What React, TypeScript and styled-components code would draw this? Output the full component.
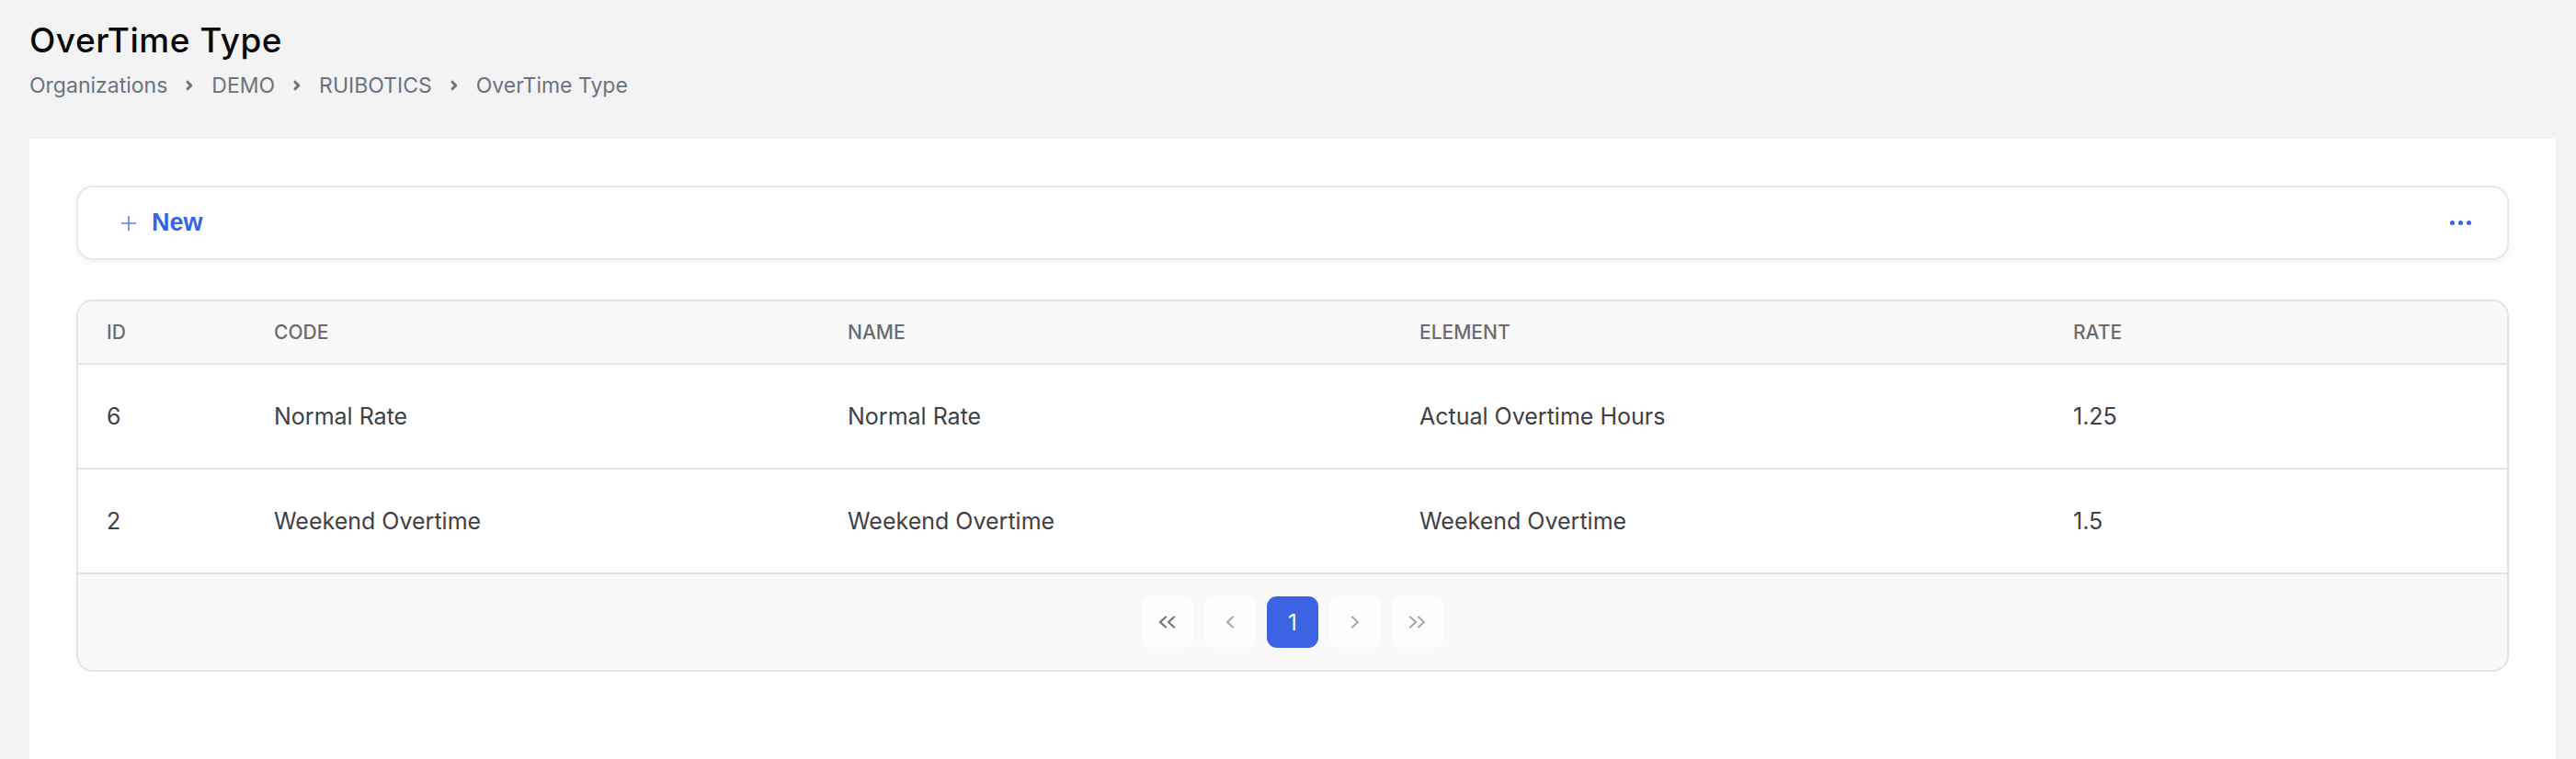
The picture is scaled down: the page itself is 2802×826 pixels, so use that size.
import React from 'react';
import styled, { createGlobalStyle } from 'styled-components';

type OvertimeType = {
    id: number;
    code: string;
    name: string;
    element: string;
    rate: string;
}

const rows: Array<OvertimeType> = [
    { id: 6, code: 'Normal Rate', name: 'Normal Rate', element: 'Actual Overtime Hours', rate: '1.25' },
    { id: 2, code: 'Weekend Overtime', name: 'Weekend Overtime', element: 'Weekend Overtime', rate: '1.5' },
];

const columns = ['ID', 'CODE', 'NAME', 'ELEMENT', 'RATE'];

const crumbs = ['Organizations', 'DEMO', 'RUIBOTICS', 'OverTime Type'];

const GlobalStyle = createGlobalStyle`
    html, body {
        margin: 0;
        background: #f3f3f3;
        font-family: Inter, "Noto Sans", sans-serif;
    }
`

const Crumb = () => (
    <svg width="10" height="12" viewBox="0 0 10 12">
        <path d="M3 2.2l3.8 3.8L3 9.8" fill="none" stroke="#6b7280" strokeWidth="3" strokeLinecap="round" strokeLinejoin="round" />
    </svg>
);

// single or double chevron used by the pager buttons
const Chevron: React.FC<{ dir: 'left' | 'right'; double?: boolean }> = ({ dir, double }) => {
    const one = dir === 'left' ? 'M8 1.5L2 7l6 5.5' : 'M2 1.5L8 7l-6 5.5';
    const stroke = { fill: 'none', stroke: 'currentColor', strokeWidth: 2.2, strokeLinecap: 'round' as const, strokeLinejoin: 'round' as const };
    return <svg width={double ? 20 : 10} height="14" viewBox={double ? '0 0 20 14' : '0 0 10 14'}>
        <path d={one} {...stroke} transform={double ? 'translate(0 0)' : 'translate(0 0)'} />
        {double && <path d={one} {...stroke} transform="translate(9 0)" />}
    </svg>
};

export default function App() {
    return <Page>
        <GlobalStyle />
        <Header>
            <Title>OverTime Type</Title>
            <Breadcrumbs>
                {crumbs.map((c, i) => <React.Fragment key={c}>
                    {i > 0 && <Crumb />}
                    <span>{c}</span>
                </React.Fragment>)}
            </Breadcrumbs>
        </Header>
        <Card>
            <Toolbar>
                <NewButton>
                    <svg width="18" height="18" viewBox="0 0 18 18">
                        <path d="M9 1v16M1 9h16" stroke="#5b7ff0" strokeWidth="1.6" />
                    </svg>
                    New
                </NewButton>
                <MoreButton>
                    <Dot /><Dot /><Dot />
                </MoreButton>
            </Toolbar>
            <Table>
                <HeadRow>
                    {columns.map(c => <HeadCell key={c}>{c}</HeadCell>)}
                </HeadRow>
                {rows.map(r => <Row key={r.id}>
                    <Cell>{r.id}</Cell>
                    <Cell>{r.code}</Cell>
                    <Cell>{r.name}</Cell>
                    <Cell>{r.element}</Cell>
                    <Cell>{r.rate}</Cell>
                </Row>)}
                <Footer>
                    <PageButton tone="dark"><Chevron dir="left" double /></PageButton>
                    <PageButton><Chevron dir="left" /></PageButton>
                    <PageButton active>1</PageButton>
                    <PageButton><Chevron dir="right" /></PageButton>
                    <PageButton><Chevron dir="right" double /></PageButton>
                </Footer>
            </Table>
        </Card>
    </Page>
}

const Page = styled.div`
    display: flex;
    flex-direction: column;
    min-height: 100vh;
    padding: 0 22px 0 32px;
    box-sizing: border-box;
`

const Header = styled.div`
    display: flex;
    flex-direction: column;
    gap: 12px;
    padding-top: 22px;
    height: 151px;
    box-sizing: border-box;
`

const Title = styled.h1`
    margin: 0;
    font-size: 37px;
    line-height: 44px;
    font-weight: 500;
    color: #0a0a0a;
    letter-spacing: 0.5px;
`

const Breadcrumbs = styled.div`
    display: flex;
    align-items: center;
    gap: 19px;
    font-size: 23px;
    line-height: 30px;
    color: #6b7280;
`

const Card = styled.div`
    flex: 1;
    display: flex;
    flex-direction: column;
    gap: 43px;
    background: #ffffff;
    padding: 51px;
`

const Toolbar = styled.div`
    display: flex;
    align-items: center;
    justify-content: space-between;
    height: 81px;
    box-sizing: border-box;
    padding: 0 39px 0 46px;
    border: 2px solid #e6e8ee;
    border-radius: 18px;
    box-shadow: rgba(15, 23, 42, 0.05) 0px 3px 6px;
`

const NewButton = styled.div`
    display: flex;
    align-items: center;
    gap: 16px;
    font-family: "Liberation Sans", Arial, sans-serif;
    font-weight: 700;
    font-size: 27px;
    color: #3563e9;
    cursor: pointer;
`

const MoreButton = styled.div`
    display: flex;
    gap: 4px;
    cursor: pointer;
`

const Dot = styled.span`
    width: 5px;
    height: 5px;
    border-radius: 50%;
    background: #3563e9;
`

const Table = styled.div`
    border: 2px solid #e4e4e4;
    border-radius: 18px;
    overflow: hidden;
`

const grid = `
    display: grid;
    grid-template-columns: 182px 624px 622px 711px 1fr;
`

const HeadRow = styled.div`
    ${grid}
    height: 69px;
    align-items: center;
    background: #f9f9f9;
    border-bottom: 2px solid #e4e4e4;
    box-sizing: border-box;
`

const HeadCell = styled.div`
    padding-left: 31px;
    font-size: 21px;
    font-weight: 500;
    color: #6b6b70;
`

const Row = styled.div`
    ${grid}
    height: 114px;
    align-items: center;
    border-bottom: 2px solid #e4e4e4;
    box-sizing: border-box;
`

const Cell = styled.div`
    padding-left: 31px;
    font-size: 25px;
    color: #3f3f46;
`

const Footer = styled.div`
    display: flex;
    justify-content: center;
    gap: 12px;
    padding: 24px 0;
    background: #f9f9f9;
`

const PageButton = styled.div<{ active?: boolean; tone?: 'dark' }>`
    width: 56px;
    height: 56px;
    display: flex;
    align-items: center;
    justify-content: center;
    border-radius: 11px;
    font-size: 24px;
    background: ${p => p.active ? '#3b63e3' : '#fdfdfd'};
    color: ${p => p.active ? '#ffffff' : p.tone === 'dark' ? '#747474' : '#a8a8a8'};
    cursor: pointer;
`
